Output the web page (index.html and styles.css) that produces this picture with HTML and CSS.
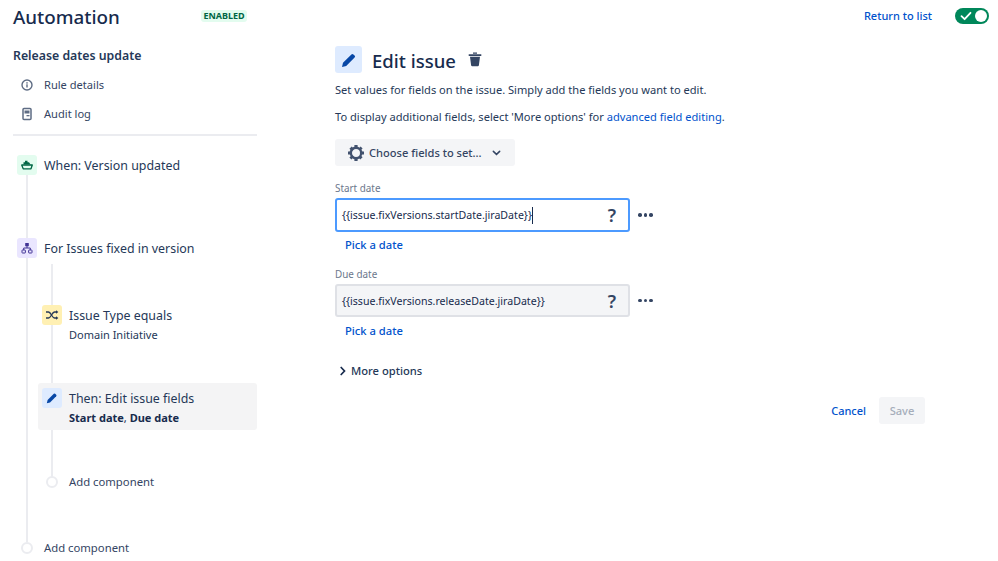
FILE: index.html
```html
<!DOCTYPE html>
<html lang="en">
<head>
<meta charset="utf-8">
<title>Automation</title>
<link rel="stylesheet" href="styles.css">
</head>
<body>
<header class="topbar">
  <div class="brand">
    <h1 class="brand-title">Automation</h1>
    <span class="badge">ENABLED</span>
  </div>
  <div class="top-actions">
    <a class="link link-strong">Return to list</a>
    <span class="toggle">
      <svg class="toggle-check" viewBox="0 0 12 10" width="12" height="10"><path d="M1.5 5.2 4.6 8.2 10.5 1.8" fill="none" stroke="#fff" stroke-width="1.8" stroke-linecap="round" stroke-linejoin="round"/></svg>
      <span class="toggle-knob"></span>
    </span>
  </div>
</header>
<div class="layout">
  <aside class="sidebar">
    <h2 class="rule-name">Release dates update</h2>
    <div class="nav-item nav-first">
      <svg class="nav-icon" viewBox="0 0 14 14" width="14" height="14"><circle cx="7" cy="7" r="5" fill="none" stroke="#5e6c84" stroke-width="1.4"/><rect x="6.3" y="6.3" width="1.4" height="3.2" fill="#5e6c84"/><rect x="6.3" y="4.2" width="1.4" height="1.4" fill="#5e6c84"/></svg>
      <span>Rule details</span>
    </div>
    <div class="nav-item">
      <svg class="nav-icon" viewBox="0 0 14 14" width="14" height="14"><rect x="3" y="1.5" width="8" height="11" rx="1" fill="none" stroke="#5e6c84" stroke-width="1.5"/><rect x="4.5" y="3.5" width="5" height="3" fill="#5e6c84"/><rect x="6.5" y="8" width="3" height="1.3" fill="#5e6c84"/></svg>
      <span>Audit log</span>
    </div>
    <hr class="divider">
    <div class="timeline">
      <div class="step step-when">
        <span class="tile tile-green">
          <svg viewBox="0 0 12 10" width="12" height="10"><path d="M2.500 4.500V2.200h1.500V.8h2.500v1.400h1.500L9.500 4.500z" fill="#006644"/><path d="M.7 5h10.600L10 8.800H2.200z" fill="none" stroke="#006644" stroke-width="1.300" stroke-linejoin="round"/></svg>
        </span>
        <span class="step-title">When: Version updated</span>
      </div>
      <div class="step step-for">
        <span class="tile tile-purple">
          <svg viewBox="0 0 12 12" width="12" height="12"><rect x="4.200" y="1" width="3.600" height="3.200" rx=".5" fill="#403294"/><g fill="none" stroke="#403294"><rect x="1" y="8" width="3.400" height="3" rx=".5"/><rect x="7.600" y="8" width="3.400" height="3" rx=".5"/><path d="M6 4v2H2.700v2M6 6h3.300v2"/></g></svg>
        </span>
        <span class="step-title">For Issues fixed in version</span>
      </div>
      <div class="branch">
        <div class="step step-if">
          <span class="tile tile-yellow">
            <svg viewBox="0 0 14 10" width="14" height="10"><path d="M1 2h2.500c2.500 0 3.500 6 6 6H12M1 8h2.500c2.500 0 3.500-6 6-6H12" fill="none" stroke="#253858" stroke-width="1.300"/><path d="M11 .3 13.400 2 11 3.700zM11 6.300 13.400 8 11 9.700z" fill="#253858"/></svg>
          </span>
          <div class="step-text">
            <span class="step-title">Issue Type equals</span>
            <span class="step-sub">Domain Initiative</span>
          </div>
        </div>
        <div class="step step-then">
          <span class="tile tile-blue">
            <svg viewBox="0 0 12 12" width="12" height="12"><path d="M.8 11.200 1.600 8 7.800 1.800a1 1 0 0 1 1.400 0l1 1a1 1 0 0 1 0 1.400L4 10.400z" fill="#0747a6"/></svg>
          </span>
          <div class="step-text">
            <span class="step-title">Then: Edit issue fields</span>
            <span class="step-sub step-bold"><b>Start date</b>, <b>Due date</b></span>
          </div>
        </div>
        <div class="add add-inner"><span class="add-dot"></span><span class="add-label">Add component</span></div>
      </div>
      <div class="add add-outer"><span class="add-dot"></span><span class="add-label">Add component</span></div>
    </div>
  </aside>
  <main class="main">
    <div class="editor-head">
      <span class="head-tile">
        <svg viewBox="0 0 16 16" width="16" height="16"><path d="M1 15 2 10.800 10.400 2.400a1.400 1.400 0 0 1 2 0l1.200 1.200a1.400 1.400 0 0 1 0 2L5.200 14z" fill="#0747a6"/></svg>
      </span>
      <h2 class="editor-title">Edit issue</h2>
      <svg class="trash" viewBox="0 0 14 15" width="14" height="15"><path d="M.7 2.300h12.600v1.600H.7zM5 .6h4v1.200H5z" fill="#344563"/><path d="M2 4.700h10l-1.100 8.500a1.200 1.200 0 0 1-1.200 1H4.300a1.200 1.200 0 0 1-1.200-1z" fill="#344563"/></svg>
    </div>
    <p class="desc desc-first">Set values for fields on the issue. Simply add the fields you want to edit.</p>
    <p class="desc">To display additional fields, select 'More options' for <a class="link">advanced field editing</a>.</p>
    <button class="choose" type="button">
      <svg viewBox="0 0 18 18" width="18" height="18"><circle cx="9" cy="9" r="5.200" fill="none" stroke="#42526e" stroke-width="2.400"/><path d="M7.400 1h3.200v3H7.400zM7.400 14h3.200v3H7.400zM1 7.400h3v3.200H1zM14 7.400h3v3.200h-3zM2.400 4.700l2.300-2.300 2 2-2.300 2.300zM11.300 13.600l2.300-2.300 2 2-2.300 2.300zM13.600 2.400l2 2-2.300 2.300-2-2zM4.700 11.300l2 2-2.300 2.300-2-2z" fill="#42526e"/></svg>
      <span>Choose fields to set...</span>
      <svg class="chev" viewBox="0 0 10 6" width="9" height="6"><path d="M1.500 1.200 5 4.500l3.500-3.300" fill="none" stroke="#344563" stroke-width="1.700" stroke-linecap="round"/></svg>
    </button>
    <div class="field field-first">
      <label class="field-label">Start date</label>
      <div class="field-row">
        <div class="input input-focus"><span class="input-value">{{issue.fixVersions.startDate.jiraDate}}</span><span class="caret"></span><span class="q">?</span></div>
        <span class="dots"><i></i><i></i><i></i></span>
      </div>
      <a class="link pick">Pick a date</a>
    </div>
    <div class="field field-second">
      <label class="field-label">Due date</label>
      <div class="field-row">
        <div class="input"><span class="input-value">{{issue.fixVersions.releaseDate.jiraDate}}</span><span class="q">?</span></div>
        <span class="dots"><i></i><i></i><i></i></span>
      </div>
      <a class="link pick">Pick a date</a>
    </div>
    <div class="more">
      <svg viewBox="0 0 6 10" width="6" height="10"><path d="M1.200 1.500 4.500 5 1.200 8.500" fill="none" stroke="#172b4d" stroke-width="1.700" stroke-linecap="round"/></svg>
      <span>More options</span>
    </div>
    <div class="actions">
      <a class="link link-strong">Cancel</a>
      <button class="save" type="button">Save</button>
    </div>
  </main>
</div>
</body>
</html>
```
FILE: styles.css
```css
* { box-sizing: border-box; }
html, body { margin: 0; padding: 0; }
body {
  width: 998px;
  height: 561px;
  overflow: hidden;
  background: #fff;
  color: #172b4d;
  font-family: "Noto Sans", "Open Sans", sans-serif;
  font-size: 11.1px;
  line-height: 16px;
}
.link { color: #0052cc; }
.link-strong { font-weight: 500; font-size: 11px; }

.topbar {
  height: 34px;
  display: flex;
  justify-content: space-between;
  align-items: center;
  padding: 0 9px 0 13px;
}
.brand { display: flex; align-items: center; }
.brand-title { margin: 0; width: 188px; font-size: 18.8px; line-height: 24px; font-weight: 500; }
.badge {
  height: 12px;
  width: 46px;
  display: flex;
  align-items: center;
  justify-content: center;
  margin-top: -2px;
  background: #e3fcef;
  border-radius: 3px;
  color: #006644;
  font-size: 9px;
  font-weight: 700;
  line-height: 12px;
}
.top-actions { display: flex; align-items: center; gap: 23px; margin-top: -2px; }
.toggle {
  position: relative;
  width: 34px;
  height: 16px;
  background: #00875a;
  border-radius: 8px;
  display: block;
}
.toggle-check { position: absolute; left: 5px; top: 3px; }
.toggle-knob { position: absolute; right: 2px; top: 2px; width: 12px; height: 12px; border-radius: 50%; background: #fff; }

.layout { display: flex; }
.sidebar { width: 244px; margin-left: 13px; flex: none; padding-top: 14px; }
.rule-name { margin: 0; font-size: 12.3px; line-height: 16px; font-weight: 600; color: #253858; }
.nav-item { display: flex; align-items: center; height: 16px; margin-top: 13px; padding-left: 7px; color: #344563; }
.nav-icon { flex: none; margin-right: 10px; }
.divider { border: 0; height: 2px; background: #ebecf0; margin: 12px 0 0; }

.timeline { position: relative; padding: 19px 0 0 4px; }
.timeline::before {
  content: "";
  position: absolute;
  left: 13px;
  top: 39px;
  bottom: 14px;
  width: 2px;
  background: #ebecf0;
}
.step { position: relative; display: flex; align-items: flex-start; }
.tile {
  flex: none;
  width: 20px;
  height: 20px;
  border-radius: 3px;
  display: flex;
  align-items: center;
  justify-content: center;
  margin-right: 7px;
}
.tile-green { background: #e3fcef; }
.tile-purple { background: #eae6ff; }
.tile-yellow { background: #fff0b3; }
.tile-blue { background: #deebff; }
.step-title { display: block; height: 20px; font-size: 12.4px; padding-top: 1px; line-height: 20px; color: #253858; }
.step-text { display: block; }
.step-sub { display: block; font-size: 11px; line-height: 20px; color: #253858; }
.step-bold { color: #172b4d; }
.step-for { margin-top: 63px; }

.branch { position: relative; margin-left: 21px; display: flow-root; }
.branch::before {
  content: "";
  position: absolute;
  left: 13px;
  top: 6px;
  height: 213px;
  width: 2px;
  background: #ebecf0;
}
.step-if { margin: 47px 0 0 4px; }
.step-then {
  margin-top: 38px;
  padding: 5px 4px 2px 4px;
  height: 47px;
  background: #f4f4f5;
  border-radius: 3px;
  width: 219px;
}
.step-then .step-sub b { font-weight: 700; }

.add { display: flex; align-items: center; position: relative; height: 16px; color: #344563; }
.add-dot { flex: none; width: 12px; height: 12px; border-radius: 50%; border: 2px solid #ebecf0; background: #fff; }
.add-inner { margin: 44px 0 0 8px; }
.add-inner .add-label { margin-left: 11px; }
.add-outer { margin: 50px 0 0 4px; }
.add-outer .add-dot { margin-right: 11px; }
.add-label { font-size: 11.3px; }

.main { margin-left: 78px; width: 590px; padding-top: 12px; }
.editor-head { display: flex; align-items: center; height: 27px; }
.head-tile {
  width: 27px;
  height: 27px;
  border-radius: 3px;
  background: #deebff;
  display: flex;
  align-items: center;
  justify-content: center;
  margin-right: 10px;
}
.editor-title { margin: 2px 12px 0 0; font-size: 18.5px; line-height: 27px; font-weight: 500; }
.desc { margin: 11px 0 0; color: #253858; line-height: 16px; }
.desc-first { margin-top: 9px; }
.choose {
  display: flex;
  align-items: center;
  width: 180px;
  height: 27px;
  margin-top: 14px;
  padding: 0 0 0 12px;
  border: 0;
  border-radius: 3px;
  background: #f4f5f7;
  color: #344563;
  font: inherit;
  font-weight: 500;
}
.choose span { margin-left: 4px; }
.chev { margin-left: 10px; }
.field { margin-top: 14px; }
.field-first { margin-top: 15px; }
.field-label { display: block; font-size: 9.9px; line-height: 14px; color: #6b778c; margin-bottom: 3px; }
.field-row { display: flex; align-items: center; }
.field-second .pick { margin-top: 6px; }
.input {
  display: flex;
  align-items: center;
  width: 295px;
  height: 33px;
  padding: 0 5px;
  border: 2px solid #dfe1e6;
  border-radius: 3px;
  background: #f4f5f7;
  font-size: 10.6px;
  color: #172b4d;
}
.input-focus { height: 34px; border-color: #4c9aff; background: #fff; }
.caret { width: 1px; height: 17px; background: #172b4d; }
.q { margin-left: auto; margin-right: 7px; font-size: 18px; font-weight: 600; color: #344563; }
.dots { display: flex; gap: 2px; margin-left: 8px; }
.dots i { width: 3.500px; height: 3.500px; border-radius: 50%; background: #344563; }
.pick { display: block; margin: 5px 0 0 10px; font-weight: 500; font-size: 11.2px; line-height: 16px; }
.more { display: flex; align-items: center; margin: 24px 0 0 5px; font-weight: 500; font-size: 11.2px; color: #253858; gap: 5px; }
.actions { display: flex; justify-content: flex-end; align-items: center; gap: 13px; margin-top: 18px; }
.save {
  width: 46px;
  height: 27px;
  border: 0;
  border-radius: 3px;
  background: #f4f5f7;
  color: #a5adba;
  font: inherit;
  font-weight: 500;
}
```
